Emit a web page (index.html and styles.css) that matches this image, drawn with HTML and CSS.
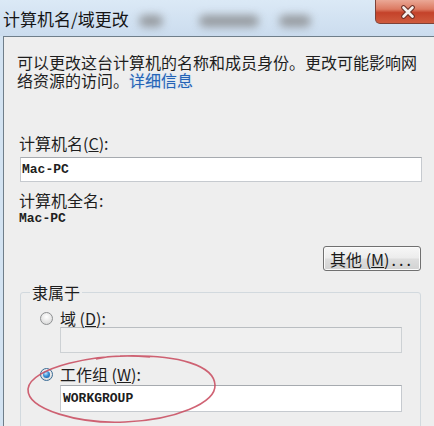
FILE: index.html
```html
<!DOCTYPE html>
<html lang="zh-CN">
<head>
<meta charset="utf-8">
<title>计算机名/域更改</title>
<link rel="stylesheet" href="styles.css">
</head>
<body>
<div class="window">
  <div class="titlebar">
    <span class="title">计算机名/域更改</span>
    <span class="blur b1"></span>
    <span class="blur b2"></span>
    <span class="blur b3"></span>
    <div class="close">
      <svg width="16" height="14" viewBox="0 0 16 14">
        <path d="M3.5 2.5 L12.5 11.5 M12.5 2.5 L3.5 11.5" stroke="#6b2e24" stroke-width="4.6" stroke-linecap="round" fill="none"/>
        <path d="M3.5 2.5 L12.5 11.5 M12.5 2.5 L3.5 11.5" stroke="#f4f0ee" stroke-width="2.6" stroke-linecap="round" fill="none"/>
      </svg>
    </div>
  </div>
  <div class="client">
    <p class="desc">可以更改这台计算机的名称和成员身份。更改可能影响网<br>络资源的访问。<a class="link">详细信息</a></p>
    <div class="label label-first">计算机名(<u>C</u>):</div>
    <div class="field">Mac-PC</div>
    <div class="label label-second">计算机全名:</div>
    <div class="value">Mac-PC</div>
    <div class="btn-row">
      <div class="btn">其他 (<u>M</u>)<span class="dots">...</span></div>
    </div>
    <fieldset class="group">
      <legend>隶属于</legend>
      <div class="group-inner">
        <div class="radio-row"><span class="radio"></span><span>域 (<u>D</u>):</span></div>
        <div class="field disabled"></div>
        <div class="radio-row second"><span class="radio checked"></span><span>工作组 (<u>W</u>):</span></div>
        <div class="field wg">WORKGROUP</div>
      </div>
    </fieldset>
  </div>
  <svg class="mark" width="434" height="426" viewBox="0 0 434 426">
    <path d="M150 357 C 95 352, 30 368, 28 389 C 27 410, 80 424, 125 422 C 175 420, 216 403, 215 385 C 214 366, 180 354, 120 356 C 112 356, 104 357, 96 359" fill="none" stroke="#c8485c" stroke-width="1.6" opacity="0.85"/>
  </svg>
</div>
</body>
</html>
```

FILE: styles.css
```css
body {
  margin: 0;
}

.window {
  position: relative;
  width: 434px;
  height: 426px;
  overflow: hidden;
  background: #d3e3f2;
  font-family: "Noto Sans CJK SC", "Noto Sans", sans-serif;
  color: #1e1e1e;
}

.titlebar {
  height: 36px;
  display: flex;
  align-items: flex-start;
  background: linear-gradient(#dbe9f6, #cbdcee);
}

.title {
  font-size: 17px;
  line-height: 20px;
  margin-top: 9px;
  margin-left: 3px;
  color: #151515;
}

.blur {
  height: 12px;
  margin-top: 15px;
  background: #7e7e7e;
  filter: blur(4px);
  opacity: 0.7;
  border-radius: 6px;
}

.b1 { width: 24px; margin-left: 10px; }
.b2 { width: 60px; margin-left: 36px; }
.b3 { width: 32px; margin-left: 20px; }

.close {
  margin-left: auto;
  margin-right: -8px;
  width: 67px;
  height: 24px;
  box-sizing: border-box;
  border: 1px solid #7d4238;
  border-top: none;
  border-radius: 0 0 5px 5px;
  background: linear-gradient(#eaa896 0%, #dc7a62 40%, #c4422a 55%, #cf5b3e 100%);
  display: flex;
  align-items: center;
  justify-content: center;
  padding-right: 1px;
}

.client {
  margin-left: 3px;
  height: 400px;
  border-top: 1px solid #6f7e8a;
  border-left: 1px solid #6f7e8a;
  background: #eeeeee;
  padding: 16px 12px 0 16px;
}

.desc {
  margin: 0 0 0 -3px;
  font-size: 16px;
  line-height: 18px;
  white-space: nowrap;
}

.link {
  color: #2463b6;
  text-shadow: 0 0 2px #b4d0ee;
}

.label {
  font-size: 16px;
  line-height: 18px;
}

.label-first {
  margin-top: 45px;
  margin-left: -1px;
}

.label-second {
  margin-top: 10px;
  margin-left: -1px;
  line-height: 17px;
}

.field {
  box-sizing: border-box;
  height: 25px;
  margin-top: 5px;
  background: #ffffff;
  border: 1px solid #c6cacf;
  border-top-color: #a6aaaf;
  padding-left: 1px;
  display: flex;
  align-items: center;
  font-family: "Liberation Mono", monospace;
  font-weight: bold;
  font-size: 13px;
  color: #202020;
}

.value {
  font-family: "Liberation Mono", monospace;
  font-weight: bold;
  font-size: 13px;
  line-height: 16px;
  margin-top: 2px;
  margin-left: -1px;
  color: #202020;
}

.btn-row {
  display: flex;
  justify-content: flex-end;
  margin-top: 19px;
}

.btn {
  box-sizing: border-box;
  width: 98px;
  height: 25px;
  margin-right: 1px;
  border: 1px solid #707070;
  border-radius: 3px;
  background: linear-gradient(#f7f7f7 0%, #ececec 48%, #dedede 52%, #d2d2d2 100%);
  box-shadow: inset 0 0 0 1px #fbfbfb;
  display: flex;
  align-items: center;
  justify-content: center;
  font-size: 16px;
  line-height: 18px;
  color: #1a1a1a;
}

.dots {
  letter-spacing: 3px;
  margin-left: 2px;
}

.group {
  margin: 12px 1px 0 0;
  padding: 0;
  min-width: 0;
  border: 1px solid #d2d9de;
  border-radius: 3px;
}

.group legend {
  margin-left: 9px;
  padding: 0 2px;
  font-size: 16px;
  line-height: 18px;
}

.group-inner {
  padding: 8px 18px 40px 19px;
}

.radio-row {
  display: flex;
  align-items: center;
  gap: 7px;
  height: 18px;
  font-size: 16px;
  line-height: 18px;
}

.radio-row.second {
  margin-top: 12px;
}

.radio {
  position: relative;
  width: 13px;
  height: 13px;
  box-sizing: border-box;
  border-radius: 50%;
  border: 1px solid #8e9092;
  background: radial-gradient(circle at 50% 35%, #ffffff 0%, #e6e6e6 55%, #cfcfcf 100%);
}

.radio.checked {
  border-color: #3a6c96;
}

.radio.checked::after {
  content: "";
  position: absolute;
  left: 2px;
  top: 2px;
  width: 7px;
  height: 7px;
  border-radius: 50%;
  background: radial-gradient(circle at 40% 35%, #bfe6ff 0%, #3a8fd6 45%, #0d4f93 100%);
}

.field.disabled {
  height: 26px;
  margin-top: 0;
  margin-left: 20px;
  background: #f0f0f0;
  border-color: #cdd1d4;
  border-top-color: #b9bdc1;
}

.field.wg {
  height: 27px;
  margin-top: 2px;
  margin-left: 20px;
  padding-left: 2px;
}

.mark {
  position: absolute;
  left: 0;
  top: 0;
  pointer-events: none;
}
```
